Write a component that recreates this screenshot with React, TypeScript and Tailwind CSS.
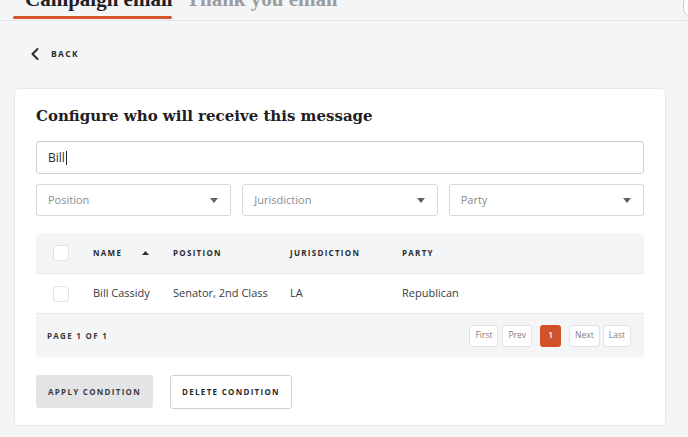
import { ChevronLeft } from 'lucide-react';

const sans = { fontFamily: '"Open Sans", "Liberation Sans", sans-serif' };
const serif = { fontFamily: '"DejaVu Serif", "Liberation Serif", serif' };
const tabSerif = { fontFamily: '"Liberation Serif", "DejaVu Serif", serif' };

function Caret() {
  return (
    <svg width="8" height="5" viewBox="0 0 8 5" className="shrink-0">
      <path d="M0 0h8L4 5z" fill="#5f6368" />
    </svg>
  );
}

function Select({ label }: { label: string }) {
  return (
    <div className="flex-1 h-[32px] flex items-center justify-between px-[11px] pr-[12px] border border-[#d6d8db] rounded-[3px] bg-white">
      <span className="text-[11px] text-[#8a8d91]">{label}</span>
      <Caret />
    </div>
  );
}

function Box() {
  return <div className="w-[16px] h-[16px] rounded-[3px] border border-[#e1e3e6] bg-white" />;
}

function PageBtn({ label }: { label: string }) {
  return (
    <div className="h-[22px] px-[5px] flex items-center border border-[#e1e3e6] rounded-[3px] bg-white text-[8.5px] text-[#7d8084]">
      {label}
    </div>
  );
}

export default function App() {
  return (
    <div className="w-[688px] h-[437px] bg-[#f4f5f7] overflow-hidden relative" style={sans}>
      <div className="h-[21px] border-b border-[#e4e5e8] flex items-end pl-[13px] relative">
        <div className="relative h-[21px] w-[159px]">
          <span className="absolute left-[12px] bottom-[10px] text-[21px] font-bold text-[#1f2023] whitespace-nowrap leading-[22px]" style={tabSerif}>
            Campaign email
          </span>
          <div className="absolute left-0 right-0 bottom-[1px] h-[3px] bg-[#d2572c] rounded-full" />
        </div>
        <div className="relative h-[21px] w-[160px] ml-[14px]">
          <span className="absolute left-0 bottom-[10px] text-[21px] font-bold text-[#9a9ca0] whitespace-nowrap leading-[22px]" style={tabSerif}>
            Thank you email
          </span>
        </div>
        <div className="absolute right-[-14px] top-[-6px] w-[19px] h-[24px] rounded-full border border-[#c9cbcf] bg-white" />
      </div>

      <div className="flex items-center gap-[6px] pl-[25px] mt-[23px] h-[20px]">
        <ChevronLeft size={20} strokeWidth={2.4} className="text-[#2a2b2e]" />
        <span className="text-[8.5px] font-bold tracking-[0.16em] text-[#2a2b2e]">BACK</span>
      </div>

      <div className="mx-[14px] w-[652px] mt-[24px] bg-white rounded-[5px] border border-[#e8e9ec] px-[21px] pt-[15px] pb-[16px]">
        <h2 className="text-[15px] font-bold text-[#1f2023] leading-[24px]" style={serif}>
          Configure who will receive this message
        </h2>

        <div className="mt-[13px] h-[33px] border border-[#cfd1d4] rounded-[3px] flex items-center px-[11px] shadow-[inset_0_1px_1px_rgba(0,0,0,0.04)]">
          <span className="text-[12px] text-[#2a2b2e]">Bill</span>
          <span className="w-px h-[14px] bg-[#2a2b2e] ml-[1px]" />
        </div>

        <div className="mt-[10px] flex gap-[11px]">
          <Select label="Position" />
          <Select label="Jurisdiction" />
          <Select label="Party" />
        </div>

        <div className="mt-[17px] rounded-[4px] overflow-hidden bg-[#f4f5f7]">
          <div className="h-[41px] flex items-center border-b border-[#e6e7ea] text-[8px] font-bold tracking-[0.16em] text-[#2a2b2e]">
            <div className="w-[57px] pl-[17px]"><Box /></div>
            <div className="w-[80px] flex items-center">
              NAME
              <svg width="7" height="4" viewBox="0 0 7 4" className="ml-[20px]"><path d="M0 4h7L3.5 0z" fill="#2a2b2e" /></svg>
            </div>
            <div className="w-[117px]">POSITION</div>
            <div className="w-[112px]">JURISDICTION</div>
            <div>PARTY</div>
          </div>
          <div className="h-[40px] flex items-center bg-white border-b border-[#e6e7ea] text-[11px] text-[#3a3b3e]">
            <div className="w-[57px] pl-[17px]"><Box /></div>
            <div className="w-[80px]">Bill Cassidy</div>
            <div className="w-[117px]">Senator, 2nd Class</div>
            <div className="w-[112px]">LA</div>
            <div>Republican</div>
          </div>
          <div className="h-[43px] flex items-center justify-between pl-[11px] pr-[13px]">
            <span className="text-[8px] font-bold tracking-[0.16em] text-[#3a3b3e]">PAGE 1 OF 1</span>
            <div className="flex items-center">
              <PageBtn label="First" />
              <div className="w-[4px]" />
              <PageBtn label="Prev" />
              <div className="h-[22px] w-[21px] mx-[8px] flex items-center justify-center rounded-[3px] bg-[#d2522a] text-[8.5px] font-semibold text-white">
                1
              </div>
              <PageBtn label="Next" />
              <div className="w-[3px]" />
              <PageBtn label="Last" />
            </div>
          </div>
        </div>

        <div className="mt-[18px] flex gap-[17px]">
          <button className="h-[33px] w-[117px] rounded-[3px] bg-[#e3e4e6] text-[8px] font-bold tracking-[0.16em] text-[#3a3b3e]">
            APPLY CONDITION
          </button>
          <button className="h-[34px] w-[122px] rounded-[3px] bg-white border border-[#cfd1d4] text-[8px] font-bold tracking-[0.16em] text-[#2a2b2e]">
            DELETE CONDITION
          </button>
        </div>
      </div>
    </div>
  );
}
